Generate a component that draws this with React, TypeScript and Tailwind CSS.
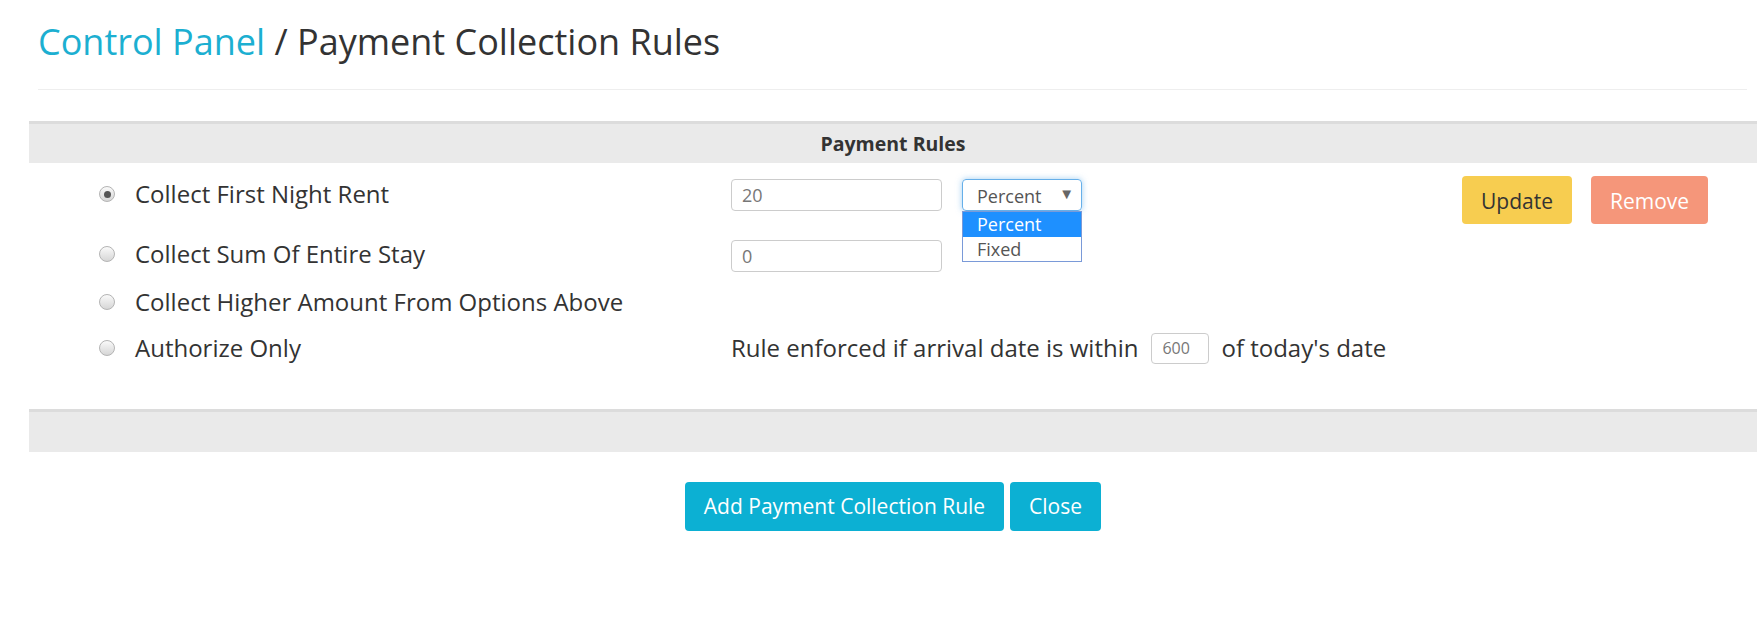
import React from 'react'

const font = { fontFamily: '"Open Sans", "Noto Sans", sans-serif' }

function Radio({ checked = false }: { checked?: boolean }) {
  return (
    <span className="w-[16px] h-[16px] rounded-full border border-[#b4b4b4] bg-gradient-to-b from-[#fafafa] to-[#d6d6d6] flex items-center justify-center shrink-0">
      {checked && <span className="w-[7px] h-[7px] rounded-full bg-[#555]" />}
    </span>
  )
}

function Option({ label, checked }: { label: string; checked?: boolean }) {
  return (
    <div className="w-[702px] pl-[70px] flex items-center gap-[20px] h-[30px] text-[24px] leading-[30px] text-[#333] shrink-0">
      <Radio checked={checked} />
      <span>{label}</span>
    </div>
  )
}

export default function App() {
  return (
    <div className="w-[1761px] h-[621px] bg-white overflow-hidden" style={font}>
      <div className="ml-[38px] mr-[14px] pt-[22px] pb-[27px] border-b border-[#eee]">
        <h1 className="text-[36px] leading-[40px] text-[#333]">
          <span className="text-[#1cafd1]">Control Panel</span> / Payment Collection Rules
        </h1>
      </div>

      <div className="ml-[29px] mr-[4px] mt-[31px]">
        <div className="border-t-[3px] border-[#dcdcdc] bg-[#eaeaea] h-[42px] flex items-center justify-center">
          <span className="text-[19.5px] font-bold text-[#333]">Payment Rules</span>
        </div>

        <div className="pt-[13px] pb-[43px]">
          {/* row 1 */}
          <div className="flex items-start h-[49px]">
            <div className="mt-[3px]"><Option label="Collect First Night Rent" checked /></div>
            <div className="mt-[3px] w-[211px] h-[32px] border border-[#ccc] rounded-[4px] pl-[10px] pt-[1px] flex items-center text-[18px] text-[#777]">20</div>
            <div className="relative mt-[3px] ml-[20px] w-[120px] h-[32px]">
              <div className="h-full border border-[#66afe9] rounded-[4px] shadow-[0_0_6px_rgba(102,175,233,0.6)] pl-[14px] pr-[7px] pt-[3px] flex items-center justify-between text-[18px] text-[#555]">
                <span>Percent</span>
                <span className="text-[15px] text-[#666] -mt-[6px]">▼</span>
              </div>
              <div className="absolute left-0 top-full w-full border border-[#7a9ad8] bg-white z-10 text-[18px]">
                <div className="h-[25px] bg-[#1e90ff] text-white pl-[14px] flex items-center">Percent</div>
                <div className="h-[24px] text-[#555] pl-[14px] flex items-center">Fixed</div>
              </div>
            </div>
            <button className="ml-[380px] w-[110px] h-[48px] rounded-[4px] bg-[#f7cd50] pt-[3px] text-[21px] text-[#333]">Update</button>
            <button className="ml-[19px] w-[117px] h-[48px] rounded-[4px] bg-[#f5967a] pt-[3px] text-[21px] text-white">Remove</button>
          </div>

          {/* row 2 */}
          <div className="flex items-start h-[47px]">
            <div className="mt-[14px]"><Option label="Collect Sum Of Entire Stay" /></div>
            <div className="mt-[15px] w-[211px] h-[32px] border border-[#ccc] rounded-[4px] pl-[10px] pt-[1px] flex items-center text-[18px] text-[#777]">0</div>
          </div>

          {/* row 3 */}
          <div className="flex items-start h-[45px]">
            <div className="mt-[15px]"><Option label="Collect Higher Amount From Options Above" /></div>
          </div>

          {/* row 4 */}
          <div className="flex items-start h-[49px]">
            <div className="mt-[16px]"><Option label="Authorize Only" /></div>
            <div className="mt-[16px] flex items-center h-[30px] text-[24px] text-[#333]">
              <span>Rule enforced if arrival date is within</span>
              <span className="ml-[13px] w-[58px] h-[31px] border border-[#ccc] rounded-[4px] pl-[10px] flex items-center text-[16px] text-[#777]">600</span>
              <span className="ml-[12px]">of today's date</span>
            </div>
          </div>
        </div>

        <div className="border-t-[3px] border-[#dcdcdc] bg-[#eaeaea] h-[43px]" />

        <div className="flex justify-center gap-[6px] mt-[30px]">
          <button className="w-[319px] h-[49px] rounded-[4px] bg-[#0cb0d3] text-white text-[21px]">Add Payment Collection Rule</button>
          <button className="w-[91px] h-[49px] rounded-[4px] bg-[#0cb0d3] text-white text-[21px]">Close</button>
        </div>
      </div>
    </div>
  )
}
